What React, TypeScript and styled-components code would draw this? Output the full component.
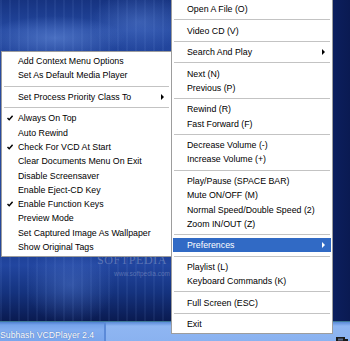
import React from "react";
import styled, { createGlobalStyle } from "styled-components";

const GlobalStyle = createGlobalStyle`
  html, body {
    margin: 0;
    padding: 0;
  }
  body {
    width: 350px;
    height: 341px;
    overflow: hidden;
    background: #0b1c55;
  }
`;

const ITEM_H = 14.3;
const SEP_H = 7.2;

const Screen = styled.div`
  position: relative;
  width: 350px;
  height: 341px;
  overflow: hidden;
  display: flex;
  flex-direction: column;
  font-family: "Liberation Sans", Arial, sans-serif;
`;

const Desktop = styled.div`
  flex: 1;
  background:
    linear-gradient(90deg, transparent 333px, #0c1f5e 333px, #0a1a52 350px),
    radial-gradient(ellipse 70px 22px at 55px 38px, rgba(120, 160, 235, 0.45), transparent),
    radial-gradient(ellipse 50px 30px at 140px 22px, rgba(110, 150, 230, 0.35), transparent),
    radial-gradient(ellipse 45px 40px at 70px 285px, rgba(100, 140, 225, 0.35), transparent),
    repeating-linear-gradient(90deg, rgba(140, 175, 240, 0.08) 0 2px, transparent 2px 9px),
    linear-gradient(
      180deg,
      #163380 0px,
      #2448a0 30px,
      #21449b 52px,
      #1c3e92 250px,
      #2246a0 265px,
      #15337f 292px,
      #0a1b52 320px
    );
`;

const Taskbar = styled.div`
  height: 19px;
  display: flex;
  align-items: stretch;
  border-top: 1px solid #3f7a96;
  background: linear-gradient(180deg, #4f80d2 0px, #76a3ea 3px, #82adf0 8px, #7aa6ec 19px);
`;

const TaskButton = styled.div`
  width: 106px;
  display: flex;
  align-items: flex-end;
  padding-bottom: 1px;
  box-sizing: border-box;
  border-right: 2px solid #5b8ad8;
  color: #ffffff;
  font-size: 8.7px;
  line-height: 10px;
  text-shadow: 0 0 1px rgba(20, 50, 120, 0.6);
  white-space: nowrap;
`;

const TaskRest = styled.div`
  flex: 1;
  background: linear-gradient(180deg, #5a8ad8 0px, #8fb6f2 4px, #8ab2f0 19px);
`;

const Tray = styled.div`
  position: absolute;
  right: 2px;
  bottom: 3px;
  width: 12px;
  height: 8px;
`;

const Watermark = styled.div`
  position: absolute;
  left: 97px;
  top: 254px;
  white-space: nowrap;
  font-family: "Liberation Serif", "Times New Roman", serif;
  font-size: 12px;
  line-height: 12px;
  letter-spacing: 0.6px;
  color: rgba(205, 210, 225, 0.35);
  pointer-events: none;
`;

const WatermarkUrl = styled.div`
  position: absolute;
  left: 114px;
  top: 270px;
  white-space: nowrap;
  font-size: 6.5px;
  line-height: 8px;
  color: rgba(200, 210, 230, 0.35);
  pointer-events: none;
`;

const Menu = styled.div<{ $left: number; $top: number; $width: number }>`
  position: absolute;
  left: ${(p) => p.$left}px;
  top: ${(p) => p.$top}px;
  width: ${(p) => p.$width}px;
  box-sizing: border-box;
  padding: 2px 1px;
  background: #ffffff;
  border: 1px solid #9d9d9d;
  font-size: 8.8px;
  color: #000000;
  z-index: 2;
`;

const Item = styled.div<{ $active?: boolean }>`
  display: flex;
  align-items: center;
  height: ${ITEM_H}px;
  white-space: nowrap;
  color: ${(p) => (p.$active ? "#ffffff" : "#000000")};
  background: ${(p) => (p.$active ? "#316ac5" : "transparent")};
`;

const Gutter = styled.span<{ $w: number }>`
  width: ${(p) => p.$w}px;
  flex: 0 0 auto;
  display: flex;
  align-items: center;
  padding-left: 4px;
  box-sizing: border-box;
`;

const Label = styled.span`
  flex: 1;
`;

const ArrowCell = styled.span<{ $w: number }>`
  width: ${(p) => p.$w}px;
  flex: 0 0 auto;
  display: flex;
  align-items: center;
`;

const Separator = styled.div`
  height: ${SEP_H}px;
  display: flex;
  align-items: center;
  padding: 0 1px;

  &::after {
    content: "";
    flex: 1;
    height: 1px;
    background: #c3c3c3;
  }
`;

const Arrow = ({ color }: { color: string }) => (
  <svg width="3" height="6" viewBox="0 0 3 6">
    <path d="M0 0 L3 3 L0 6 Z" fill={color} />
  </svg>
);

const Check = () => (
  <svg width="6" height="6" viewBox="0 0 6 6">
    <path d="M0.5 3 L2.2 4.8 L5.6 0.8" stroke="#000" strokeWidth="1.4" fill="none" />
  </svg>
);

type Entry =
  | { sep: true }
  | { label: string; checked?: boolean; sub?: boolean; active?: boolean };

const mainItems: Entry[] = [
  { label: "Open A File (O)" },
  { sep: true },
  { label: "Video CD (V)" },
  { sep: true },
  { label: "Search And Play", sub: true },
  { sep: true },
  { label: "Next (N)" },
  { label: "Previous (P)" },
  { sep: true },
  { label: "Rewind (R)" },
  { label: "Fast Forward (F)" },
  { sep: true },
  { label: "Decrease Volume (-)" },
  { label: "Increase Volume (+)" },
  { sep: true },
  { label: "Play/Pause (SPACE BAR)" },
  { label: "Mute ON/OFF (M)" },
  { label: "Normal Speed/Double Speed (2)" },
  { label: "Zoom IN/OUT (Z)" },
  { sep: true },
  { label: "Preferences", sub: true, active: true },
  { sep: true },
  { label: "Playlist (L)" },
  { label: "Keyboard Commands (K)" },
  { sep: true },
  { label: "Full Screen  (ESC)" },
  { sep: true },
  { label: "Exit" },
];

const prefItems: Entry[] = [
  { label: "Add Context Menu Options" },
  { label: "Set As Default Media Player" },
  { sep: true },
  { label: "Set Process Priority Class To", sub: true },
  { sep: true },
  { label: "Always On Top", checked: true },
  { label: "Auto Rewind" },
  { label: "Check For VCD At Start", checked: true },
  { label: "Clear Documents Menu On Exit" },
  { label: "Disable Screensaver" },
  { label: "Enable Eject-CD Key" },
  { label: "Enable Function Keys", checked: true },
  { label: "Preview Mode" },
  { label: "Set Captured Image As Wallpaper" },
  { label: "Show Original Tags" },
];

const MenuList = ({ items, gutter, tail }: { items: Entry[]; gutter: number; tail: number }) => (
  <>
    {items.map((it, i) =>
      "sep" in it ? (
        <Separator key={i} />
      ) : (
        <Item key={i} $active={it.active}>
          <Gutter $w={gutter}>{it.checked && <Check />}</Gutter>
          <Label>{it.label}</Label>
          <ArrowCell $w={tail}>{it.sub && <Arrow color={it.active ? "#fff" : "#000"} />}</ArrowCell>
        </Item>
      )
    )}
  </>
);

export default function App() {
  return (
    <>
      <GlobalStyle />
      <Screen>
        <Desktop />
        <Taskbar>
          <TaskButton>Subhash VCDPlayer 2.4</TaskButton>
          <TaskRest />
        </Taskbar>
        <Tray>
          <svg width="12" height="8" viewBox="0 0 12 8">
            <rect x="0" y="1" width="9" height="6" fill="#1a1a1a" />
            <rect x="2" y="2.5" width="5" height="2" fill="#5a6a8a" />
            <rect x="9" y="3" width="3" height="2" fill="#1a1a1a" />
          </svg>
        </Tray>

        <Watermark>SOFTPEDIA</Watermark>
        <WatermarkUrl>www.softpedia.com</WatermarkUrl>

        <Menu $left={1} $top={51} $width={171}>
          <MenuList items={prefItems} gutter={15} tail={9} />
        </Menu>
        <Menu $left={171} $top={-1} $width={162}>
          <MenuList items={mainItems} gutter={14} tail={9} />
        </Menu>
      </Screen>
    </>
  );
}
